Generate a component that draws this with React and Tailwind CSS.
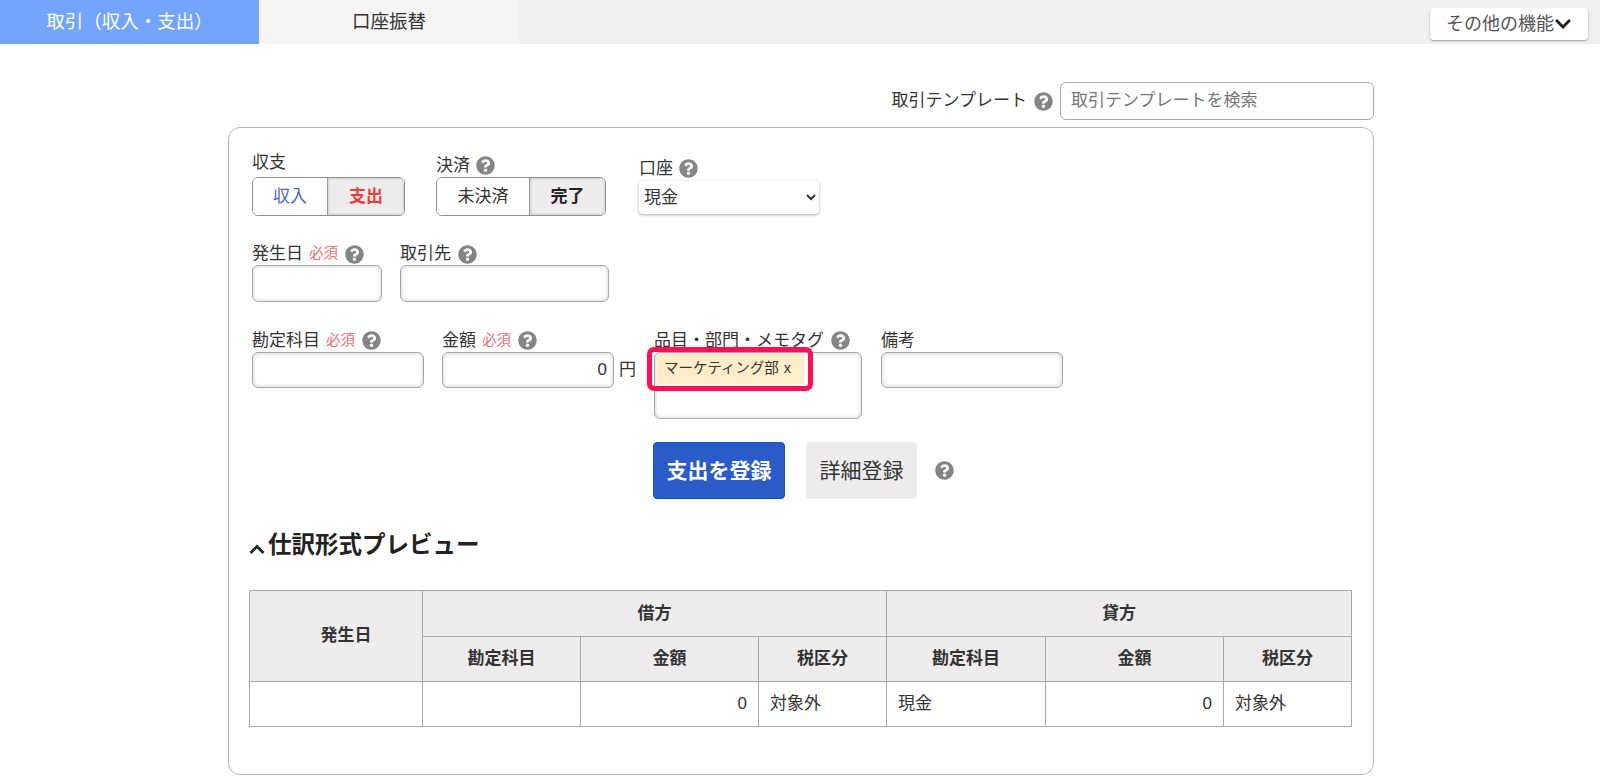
import React from 'react';
import { FaQuestionCircle, FaChevronDown } from 'react-icons/fa';

const Help = ({ className = '' }) => (
  <FaQuestionCircle className={`inline-block shrink-0 text-[19px] text-[#858585] ${className}`} />
);

const Required = () => <span className="ml-[6px] text-[14.5px] text-[#ec6f78]">必須</span>;

const Label = ({ children, className = 'h-6' }) => (
  <div className={`flex items-center whitespace-nowrap pt-px text-[17px] ${className}`}>{children}</div>
);

const inputCls = 'block rounded-[6px] border border-[#a8a8a8] bg-white shadow-[inset_0_0_4px_rgba(0,0,0,0.2)]';

const Toggle = ({ left, right, leftCls, rightCls, leftW, w }) => (
  <div className={`flex h-[39px] overflow-hidden rounded-[6px] border border-[#8f8f8f] text-[17px] ${w}`}>
    <div className={`flex items-center justify-center bg-white ${leftCls} ${leftW}`}>{left}</div>
    <div className={`flex flex-1 items-center justify-center border-l border-[#999] bg-[#eeecec] font-bold shadow-[inset_0_0_3px_rgba(0,0,0,0.25)] ${rightCls}`}>
      {right}
    </div>
  </div>
);

const th = 'border border-[#aaa] bg-[#eeecec] font-bold text-center';
const td = 'border border-[#aaa] px-[11px]';

export default function App() {
  return (
    <div className="h-[784px] overflow-hidden bg-white font-['Liberation_Sans','Noto_Sans_CJK_JP',sans-serif] text-[#333]">
      {/* tabs */}
      <div className="flex h-[44px] items-start justify-between bg-[#efefef]">
        <div className="flex h-full text-[18.5px]">
          <div className="flex w-[259px] items-center justify-center bg-[#73a5ff] text-white">取引（収入・支出）</div>
          <div className="flex w-[260px] items-center justify-center bg-[#f6f4f4]">口座振替</div>
        </div>
        <div className="mr-[12px] mt-[8px] flex h-[32px] w-[158px] items-center justify-center rounded-[4px] bg-white text-[18px] text-[#555] shadow-[0_1px_2px_rgba(0,0,0,0.35)]">
          その他の機能
          <FaChevronDown className="text-[18px] text-[#222]" />
        </div>
      </div>

      <div className="ml-[228px] w-[1146px]">
        {/* template search */}
        <div className="mt-[38px] flex h-[38px] items-center justify-end">
          <span className="text-[17px]">取引テンプレート</span>
          <Help className="ml-[7px]" />
          <div className="ml-[7px] flex h-[38px] w-[314px] items-center rounded-[6px] border border-[#a8a8a8] px-[10px] text-[17px] text-[#777]">
            取引テンプレートを検索
          </div>
        </div>

        {/* form card */}
        <div className="mt-[7px] h-[648px] rounded-[12px] border border-[#b5b5b5] pl-[23px] pt-[22px]">
          <div className="flex">
            <div>
              <Label>収支</Label>
              <div className="mt-[3px]">
                <Toggle left="収入" right="支出" leftCls="text-[#4a66c8]" rightCls="text-[#ee3b3b]" leftW="w-[74px]" w="w-[153px]" />
              </div>
            </div>
            <div className="ml-[31px] mt-[3px]">
              <Label>決済<Help className="ml-[6px]" /></Label>
              <Toggle left="未決済" right="完了" leftCls="" rightCls="text-[#222]" leftW="w-[92px]" w="w-[170px]" />
            </div>
            <div className="ml-[33px] mt-[6px]">
              <Label>口座<Help className="ml-[6px]" /></Label>
              <select className="mt-[1px] block h-[33px] w-[180px] rounded-[4px] bg-white pl-[1px] text-[17px] shadow-[0_1px_3px_rgba(0,0,0,0.35)]">
                <option>現金</option>
              </select>
            </div>
          </div>

          <div className="mt-[26px] flex gap-[18px]">
            <div>
              <Label className="h-[23px]">発生日<Required /><Help className="ml-[7px]" /></Label>
              <div className={`${inputCls} h-[37px] w-[130px]`} />
            </div>
            <div>
              <Label className="h-[23px]">取引先<Help className="ml-[7px]" /></Label>
              <div className={`${inputCls} h-[37px] w-[209px]`} />
            </div>
          </div>

          <div className="mt-[26px] flex">
            <div>
              <Label>勘定科目<Required /><Help className="ml-[7px]" /></Label>
              <div className={`${inputCls} h-[36px] w-[172px]`} />
            </div>
            <div className="ml-[18px]">
              <Label>金額<Required /><Help className="ml-[7px]" /></Label>
              <div className="flex items-center">
                <div className={`${inputCls} flex h-[36px] w-[172px] items-center justify-end pr-[6px] text-[17px]`}>0</div>
                <span className="ml-[5px] text-[17px]">円</span>
              </div>
            </div>
            <div className="ml-[18px]">
              <Label>品目・部門・メモタグ<Help className="ml-[7px]" /></Label>
              <div className={`${inputCls} relative h-[67px] w-[208px] pl-[2px] pt-px`}>
                <div className="flex h-[30px] w-[147px] items-center whitespace-nowrap rounded-[3px] bg-[#fdedc8] pl-[7px] text-[14.5px]">
                  マーケティング部<span className="ml-[5px]">x</span>
                </div>
                <div className="pointer-events-none absolute left-[-8px] top-[-6px] h-[44px] w-[166px] rounded-[7px] border-[5px] border-[#ff0f57]" />
              </div>
            </div>
            <div className="ml-[19px]">
              <Label>備考</Label>
              <div className={`${inputCls} h-[36px] w-[182px]`} />
            </div>
          </div>

          <div className="ml-[401px] mt-[23px] flex h-[57px] items-center">
            <div className="flex h-full w-[132px] items-center justify-center rounded-[4px] border border-[#0f4fc4] bg-[#2a5bc8] text-[21px] font-bold text-white">
              支出を登録
            </div>
            <div className="ml-[21px] flex h-full w-[111px] items-center justify-center rounded-[4px] bg-[#eeecec] text-[21px]">
              詳細登録
            </div>
            <Help className="ml-[18px]" />
          </div>

          <div className="-ml-[3px] mt-[31px] flex h-[32px] items-center text-[#222]">
            <svg width="16" height="10" viewBox="0 0 16 10" className="mt-[6px] shrink-0" fill="none" stroke="#222" strokeWidth="2.8">
              <path d="M1.5 9 L8 2.5 L14.5 9" />
            </svg>
            <span className="ml-[3px] text-[23.5px] font-bold">仕訳形式プレビュー</span>
          </div>

          <table className="-ml-[3px] mt-[28px] w-[1102px] table-fixed border-collapse text-[17px]">
            <colgroup>
              <col className="w-[173px]" />
              <col className="w-[158px]" />
              <col className="w-[178px]" />
              <col className="w-[128px]" />
              <col className="w-[159px]" />
              <col className="w-[178px]" />
              <col className="w-[128px]" />
            </colgroup>
            <thead>
              <tr className="h-[46px]">
                <th rowSpan={2} className={`${th} pl-[20px]`}>発生日</th>
                <th colSpan={3} className={th}>借方</th>
                <th colSpan={3} className={th}>貸方</th>
              </tr>
              <tr className="h-[45px]">
                <th className={th}>勘定科目</th>
                <th className={th}>金額</th>
                <th className={th}>税区分</th>
                <th className={th}>勘定科目</th>
                <th className={th}>金額</th>
                <th className={th}>税区分</th>
              </tr>
            </thead>
            <tbody>
              <tr className="h-[45px]">
                <td className={td}></td>
                <td className={td}></td>
                <td className={`${td} text-right`}>0</td>
                <td className={td}>対象外</td>
                <td className={td}>現金</td>
                <td className={`${td} text-right`}>0</td>
                <td className={td}>対象外</td>
              </tr>
            </tbody>
          </table>
        </div>
      </div>
    </div>
  );
}
